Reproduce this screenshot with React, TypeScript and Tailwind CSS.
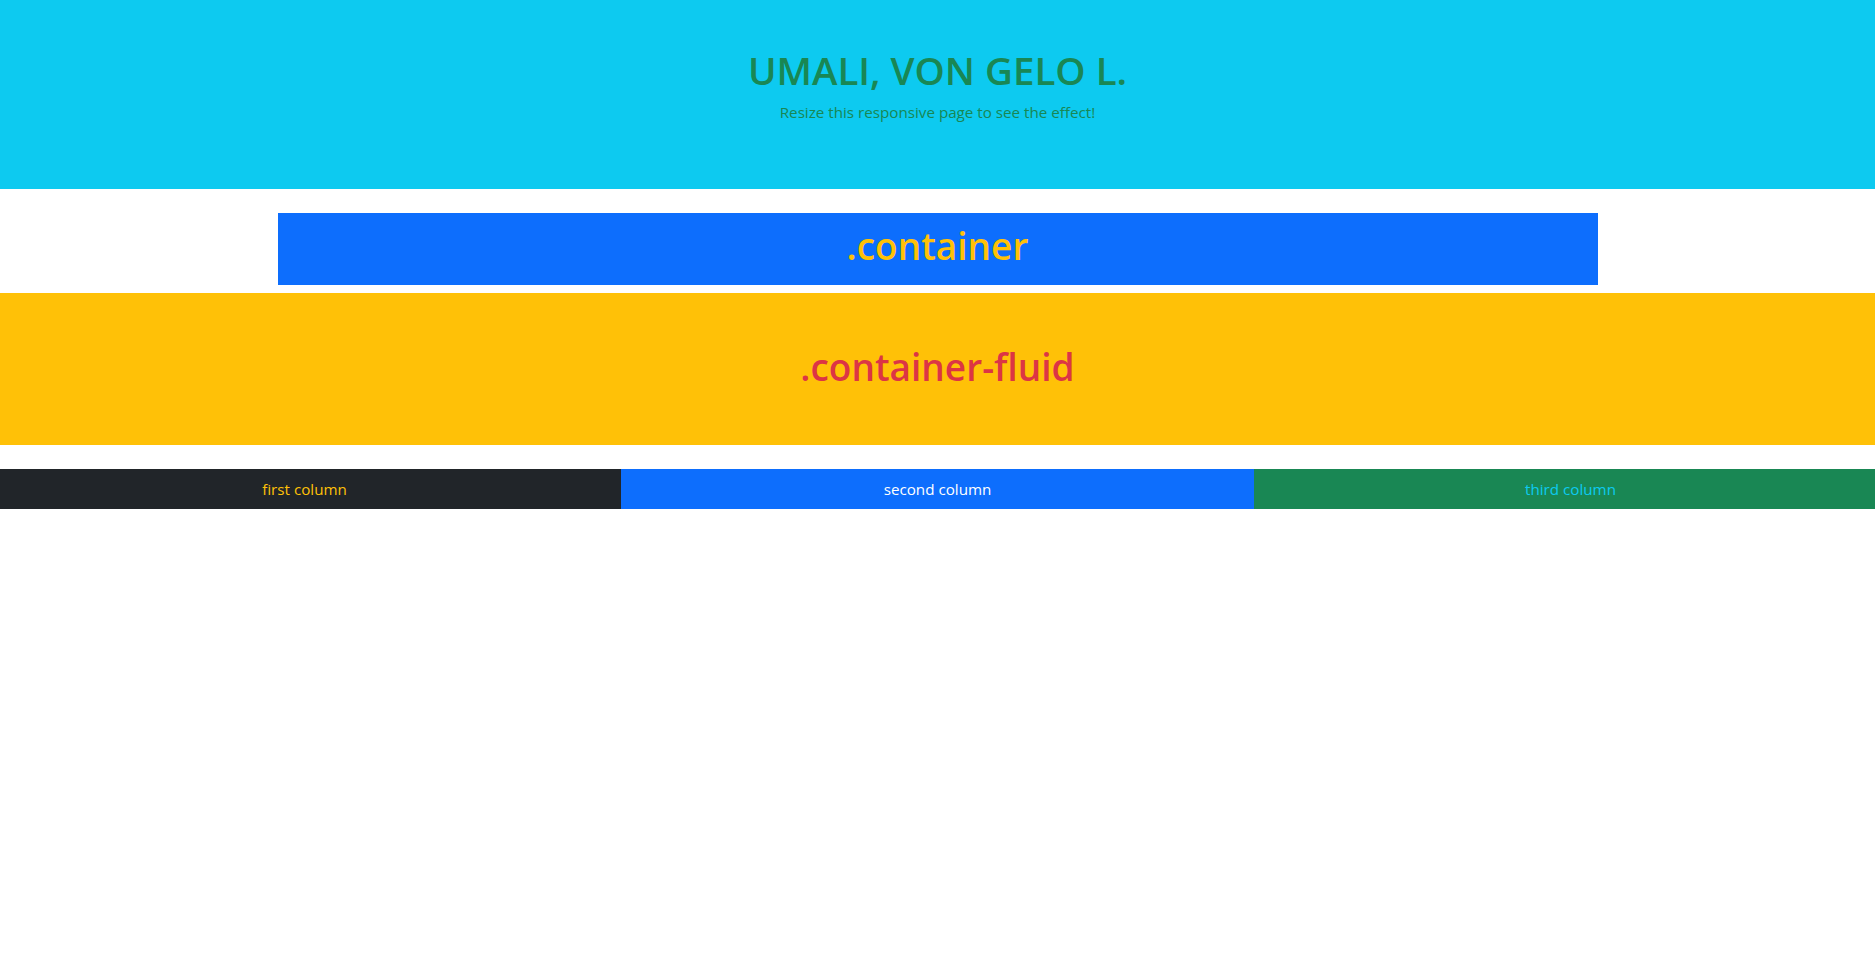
const font = { fontFamily: '"Open Sans", "Noto Sans", sans-serif' };

const columns = [
  { label: 'first column', cls: 'bg-[#212529] text-[#ffc107]' },
  { label: 'second column', cls: 'bg-[#0d6efd] text-white' },
  { label: 'third column', cls: 'bg-[#198754] text-[#0dcaf0]' },
];

const App = () => {
  return (
    <div className="min-h-screen bg-white overflow-x-hidden" style={font}>
      {/* Jumbotron-style header */}
      <div className="bg-[#0dcaf0] text-[#198754] text-center pt-[46px] pb-[49px] px-12">
        <h1 className="text-[38.5px] leading-[48px] font-semibold mb-[6px]">UMALI, VON GELO L.</h1>
        <p className="text-[15.2px] leading-6 mb-4">Resize this responsive page to see the effect!</p>
      </div>

      <div className="w-[1320px] mx-auto mt-6 bg-[#0d6efd] pt-[9px] pb-2 px-3 text-center">
        <h1 className="text-[37px] leading-[48px] font-semibold text-[#ffc107] mb-[7px]">.container</h1>
      </div>

      <div className="mt-2 bg-[#ffc107] pt-[50px] pb-12 px-12 text-center">
        <h1 className="text-[37px] leading-[48px] font-semibold text-[#dc3545] mb-[6px]">.container-fluid</h1>
      </div>

      <div className="flex -mx-3 mt-6">
        {columns.map((col) => (
          <div key={col.label} className={`flex-1 p-2 text-center text-[15.2px] leading-6 ${col.cls}`}>
            {col.label}
          </div>
        ))}
      </div>
    </div>
  );
};

export default App;
